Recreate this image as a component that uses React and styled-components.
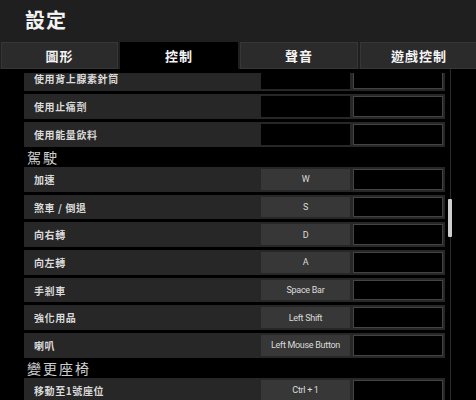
import React from "react";
import styled, { createGlobalStyle } from "styled-components";

const GlobalStyle = createGlobalStyle`
    html, body {
        margin: 0;
        padding: 0;
        background: #000;
    }
    body {
        width: 476px;
        height: 400px;
        overflow: hidden;
        font-family: "Noto Sans CJK TC", "Noto Sans", sans-serif;
    }
`;

const Screen = styled.div`
    width: 476px;
    height: 400px;
    background: #000;
    display: flex;
    flex-direction: column;
    overflow: hidden;
`;

const Header = styled.div`
    height: 42px;
    background: #1f1f1f;
    display: flex;
    align-items: center;
    padding-left: 25px;
    box-sizing: border-box;
`;

const Title = styled.h1`
    margin: 0 0 4px;
    font-size: 20px;
    font-weight: 700;
    color: #f2f2f2;
    letter-spacing: 1px;
`;

const TabBar = styled.div`
    display: grid;
    grid-template-columns: 117px 118px 118px 118px;
    column-gap: 2px;
    height: 27px;
    background: #1f1f1f;
    padding-left: 1px;
`;

const Tab = styled.div`
    display: flex;
    align-items: center;
    justify-content: center;
    font-size: 13px;
    font-weight: 700;
    color: #f4f4f4;
    letter-spacing: 1px;
    box-sizing: border-box;
    background: ${(p) => (p.$active ? "#000" : "#2b2b2b")};
    border: 1px solid ${(p) => (p.$active ? "#000" : "#363636")};
`;

const Body = styled.div`
    flex: 1;
    display: flex;
    margin-top: 4px;
    min-height: 0;
`;

const Gutter = styled.div`
    width: 24px;
    flex: none;
`;

const Viewport = styled.div`
    width: 421px;
    flex: none;
    overflow: hidden;
`;

// list is scrolled a few pixels, so the first row's top is hidden
const List = styled.div`
    margin-top: -7px;
    display: flex;
    flex-direction: column;
`;

const Section = styled.div`
    height: 20px;
    display: flex;
    align-items: center;
    padding-left: 3px;
    font-size: 14px;
    color: #cfcfcf;
    letter-spacing: 2px;
    margin-top: -3px;
`;

const Row = styled.div`
    height: ${(p) => (p.$h ? p.$h : 25)}px;
    margin-bottom: 3px;
    display: flex;
    align-items: stretch;
    background: #272727;
    padding: 2px 2px 2px 0;
    box-sizing: border-box;
    flex: none;
`;

const Label = styled.div`
    flex: 1;
    display: flex;
    align-items: center;
    padding-left: 10px;
    font-size: 10px;
    font-weight: 700;
    color: #dadada;
    letter-spacing: 0.6px;
`;

const KeyCell = styled.div`
    width: 89px;
    display: flex;
    align-items: center;
    justify-content: center;
    font-family: Roboto, "Liberation Sans", sans-serif;
    font-size: 9px;
    letter-spacing: -0.3px;
    color: #dcdcdc;
    background: ${(p) => (p.$filled ? "#373737" : "#000")};
`;

const AltCell = styled.div`
    width: 90px;
    margin-left: 3px;
    box-sizing: border-box;
    background: #000;
    border: 1px solid #444;
`;

const Track = styled.div`
    width: 4px;
    margin-left: 3px;
    flex: none;
    display: flex;
    flex-direction: column;
    background: linear-gradient(to right, transparent 2px, #2c2c2c 2px, #2c2c2c 3px, transparent 3px);
    margin-top: -4px;
`;

const Thumb = styled.div`
    margin-top: ${(p) => p.$offset}px;
    height: 38px;
    background: #cfcfcf;
    border-radius: 1px;
`;

const tabs = ["圖形", "控制", "聲音", "遊戲控制"];

const topRows = ["使用背上腺素針筒", "使用止痛劑", "使用能量飲料"];

const driving = [
    ["加速", "W"],
    ["煞車 / 倒退", "S"],
    ["向右轉", "D"],
    ["向左轉", "A"],
    ["手剎車", "Space Bar"],
    ["強化用品", "Left Shift"],
    ["喇叭", "Left Mouse Button"],
];

const seats = [["移動至1號座位", "Ctrl + 1"]];

const BindRow = ({ label, keyName, h }) => (
    <Row $h={h}>
        <Label>{label}</Label>
        <KeyCell $filled={!!keyName}>{keyName}</KeyCell>
        <AltCell />
    </Row>
);

const App = () => {
    return (
        <Screen>
            <GlobalStyle />
            <Header>
                <Title>設定</Title>
            </Header>
            <TabBar>
                {tabs.map((t, i) => (
                    <Tab key={t} $active={i === 1}>
                        {t}
                    </Tab>
                ))}
            </TabBar>
            <Body>
                <Gutter />
                <Viewport>
                    <List>
                        {topRows.map((r) => (
                            <BindRow key={r} label={r} />
                        ))}
                        <Section>駕駛</Section>
                        {driving.map(([l, k]) => (
                            <BindRow key={l} label={l} keyName={k} h={24.7} />
                        ))}
                        <Section>變更座椅</Section>
                        {seats.map(([l, k]) => (
                            <BindRow key={l} label={l} keyName={k} />
                        ))}
                    </List>
                </Viewport>
                <Track>
                    <Thumb $offset={130} />
                </Track>
            </Body>
        </Screen>
    );
};

export default App;
